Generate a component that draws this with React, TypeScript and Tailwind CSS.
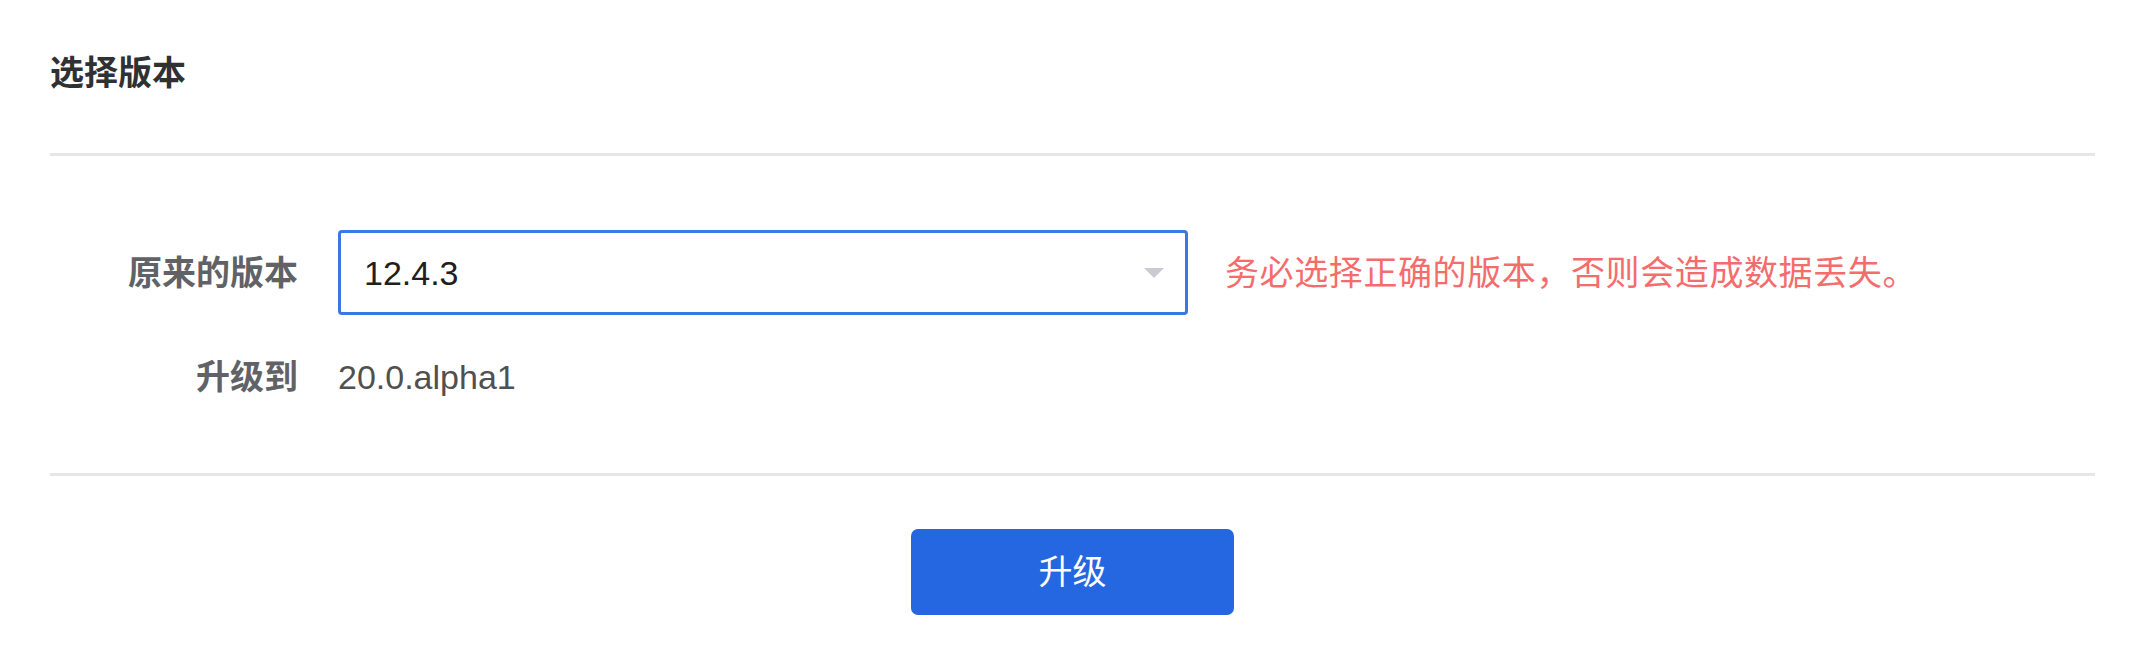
export default function App() {
    return (
        <div
            className="min-h-screen bg-white pl-[50px] pr-[43px] text-[34px] leading-none"
            style={{ fontFamily: '"Liberation Sans", "Noto Sans CJK SC", sans-serif' }}
        >
            {/* 标题 */}
            <div className="flex h-[153px] items-center pb-[8px]">
                <h2 className="font-bold text-[#303133]">选择版本</h2>
            </div>
            <div className="h-[3px] bg-[#e6e6e6]" />

            {/* 表单 */}
            <div className="pt-[74px] pb-[79px]">
                <div className="flex items-center">
                    <label className="w-[248px] text-right font-bold text-[#606266]">原来的版本</label>
                    <div className="ml-[40px] flex h-[85px] w-[850px] items-center justify-between rounded-[4px] border-[3px] border-[#3a78e8] pl-[23px] pr-[21px]">
                        <span className="text-[#202020]">12.4.3</span>
                        <span className="h-0 w-0 border-x-[10px] border-t-[10px] border-x-transparent border-t-[#c8cbd1]" />
                    </div>
                    <span className="ml-[37px] tracking-[0.6px] text-[#f56c6c]">务必选择正确的版本，否则会造成数据丢失。</span>
                </div>
                <div className="mt-[45px] flex items-center">
                    <label className="w-[248px] text-right font-bold text-[#606266]">升级到</label>
                    <span className="ml-[40px] text-[#505050]">20.0.alpha1</span>
                </div>
            </div>
            <div className="h-[3px] bg-[#e6e6e6]" />

            {/* 按钮 */}
            <div className="flex justify-center pt-[53px]">
                <button className="h-[86px] w-[323px] rounded-[7px] bg-[#2567e0] text-[34px] text-white">
                    升级
                </button>
            </div>
        </div>
    );
}
